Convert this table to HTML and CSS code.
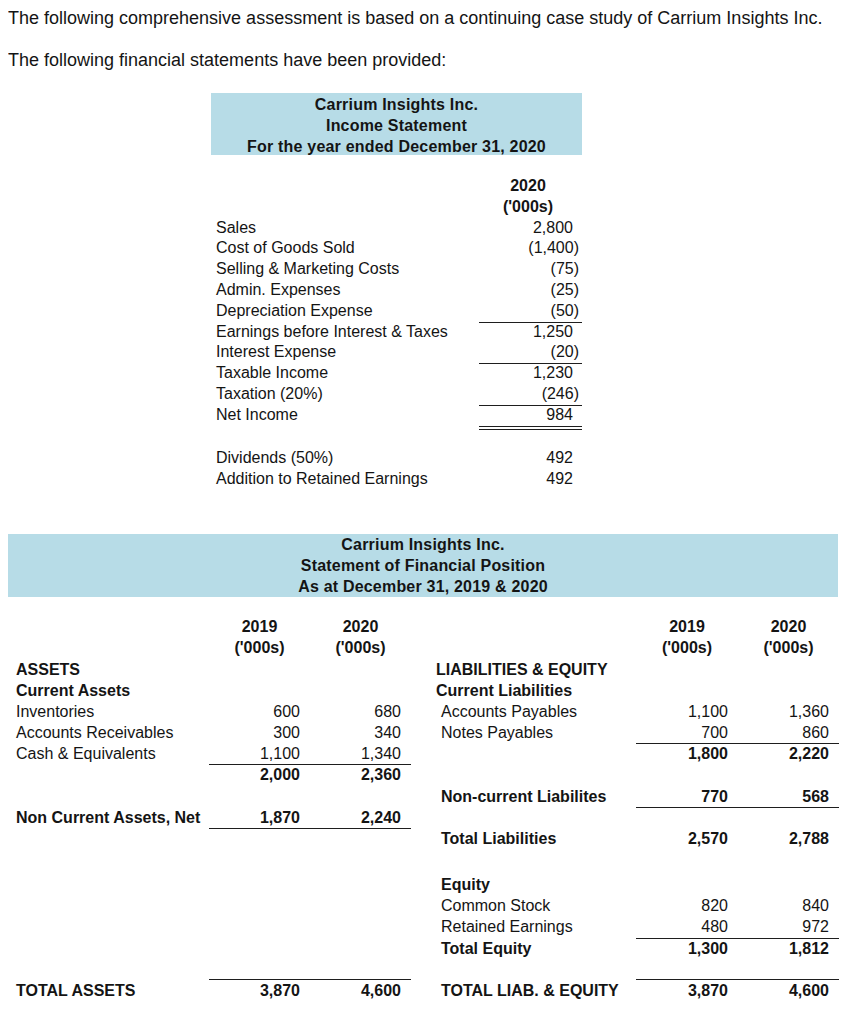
FILE: index.html
```html
<!DOCTYPE html>
<html lang="en">
<head>
<meta charset="utf-8">
<title>Carrium Insights Inc. – Financial Statements</title>
<link rel="stylesheet" href="styles.css">
</head>
<body>
<p class="intro">The following comprehensive assessment is based on a continuing case study of Carrium Insights Inc.</p>
<p class="intro intro-second">The following financial statements have been provided:</p>

<section class="income">
  <div class="banner income-banner">
    <div>Carrium Insights Inc.</div>
    <div>Income Statement</div>
    <div>For the year ended December 31, 2020</div>
  </div>
  <div class="is-rows">
    <div class="is-row"><span></span><span class="col-head">2020</span></div>
    <div class="is-row"><span></span><span class="col-head">('000s)</span></div>
    <div class="is-row"><span class="is-label">Sales</span><span class="num">2,800</span></div>
    <div class="is-row"><span class="is-label">Cost of Goods Sold</span><span class="num neg">(1,400)</span></div>
    <div class="is-row"><span class="is-label">Selling &amp; Marketing Costs</span><span class="num neg">(75)</span></div>
    <div class="is-row"><span class="is-label">Admin. Expenses</span><span class="num neg">(25)</span></div>
    <div class="is-row"><span class="is-label">Depreciation Expense</span><span class="num neg ul">(50)</span></div>
    <div class="is-row"><span class="is-label">Earnings before Interest &amp; Taxes</span><span class="num">1,250</span></div>
    <div class="is-row"><span class="is-label">Interest Expense</span><span class="num neg ul">(20)</span></div>
    <div class="is-row"><span class="is-label">Taxable Income</span><span class="num">1,230</span></div>
    <div class="is-row"><span class="is-label">Taxation (20%)</span><span class="num neg ul">(246)</span></div>
    <div class="is-row"><span class="is-label">Net Income</span><span class="num dbl">984</span></div>
    <div class="is-row is-spacer"><span></span><span></span></div>
    <div class="is-row"><span class="is-label">Dividends (50%)</span><span class="num">492</span></div>
    <div class="is-row"><span class="is-label">Addition to Retained Earnings</span><span class="num">492</span></div>
  </div>
</section>

<section class="position">
  <div class="banner position-banner">
    <div>Carrium Insights Inc.</div>
    <div>Statement of Financial Position</div>
    <div>As at December 31, 2019 &amp; 2020</div>
  </div>
  <div class="bs-rows">
    <div class="bs-row">
      <span></span><span class="col-head">2019</span><span class="col-head">2020</span><span></span>
      <span></span><span class="col-head">2019</span><span class="col-head">2020</span>
    </div>
    <div class="bs-row">
      <span></span><span class="col-head">('000s)</span><span class="col-head">('000s)</span><span></span>
      <span></span><span class="col-head">('000s)</span><span class="col-head">('000s)</span>
    </div>
    <div class="bs-row">
      <span class="lbl-left bold">ASSETS</span><span></span><span></span><span></span>
      <span class="lbl-right bold">LIABILITIES &amp; EQUITY</span><span></span><span></span>
    </div>
    <div class="bs-row">
      <span class="lbl-left bold">Current Assets</span><span></span><span></span><span></span>
      <span class="lbl-right bold">Current Liabilities</span><span></span><span></span>
    </div>
    <div class="bs-row">
      <span class="lbl-left">Inventories</span><span class="bnum">600</span><span class="bnum">680</span><span></span>
      <span class="lbl-right ind">Accounts Payables</span><span class="bnum">1,100</span><span class="bnum">1,360</span>
    </div>
    <div class="bs-row">
      <span class="lbl-left">Accounts Receivables</span><span class="bnum">300</span><span class="bnum">340</span><span></span>
      <span class="lbl-right ind">Notes Payables</span><span class="bnum ul">700</span><span class="bnum ul">860</span>
    </div>
    <div class="bs-row">
      <span class="lbl-left">Cash &amp; Equivalents</span><span class="bnum ul">1,100</span><span class="bnum ul">1,340</span><span></span>
      <span></span><span class="bnum bold">1,800</span><span class="bnum bold">2,220</span>
    </div>
    <div class="bs-row">
      <span></span><span class="bnum bold">2,000</span><span class="bnum bold">2,360</span><span></span>
      <span></span><span></span><span></span>
    </div>
    <div class="bs-row">
      <span></span><span></span><span></span><span></span>
      <span class="lbl-right ind bold">Non-current Liabilites</span><span class="bnum bold ul">770</span><span class="bnum bold ul">568</span>
    </div>
    <div class="bs-row">
      <span class="lbl-left bold">Non Current Assets, Net</span><span class="bnum bold ul">1,870</span><span class="bnum bold ul">2,240</span><span></span>
      <span></span><span></span><span></span>
    </div>
    <div class="bs-row">
      <span></span><span></span><span></span><span></span>
      <span class="lbl-right ind bold">Total Liabilities</span><span class="bnum bold">2,570</span><span class="bnum bold">2,788</span>
    </div>
    <div class="bs-row bs-gap"></div>
    <div class="bs-row">
      <span></span><span></span><span></span><span></span>
      <span class="lbl-right ind bold">Equity</span><span></span><span></span>
    </div>
    <div class="bs-row">
      <span></span><span></span><span></span><span></span>
      <span class="lbl-right ind">Common Stock</span><span class="bnum">820</span><span class="bnum">840</span>
    </div>
    <div class="bs-row">
      <span></span><span></span><span></span><span></span>
      <span class="lbl-right ind">Retained Earnings</span><span class="bnum ul">480</span><span class="bnum ul">972</span>
    </div>
    <div class="bs-row">
      <span></span><span></span><span></span><span></span>
      <span class="lbl-right ind bold">Total Equity</span><span class="bnum bold">1,300</span><span class="bnum bold">1,812</span>
    </div>
    <div class="bs-row"></div>
    <div class="bs-row">
      <span class="lbl-left bold">TOTAL ASSETS</span><span class="bnum bold total">3,870</span><span class="bnum bold total">4,600</span><span></span>
      <span class="lbl-right ind bold">TOTAL LIAB. &amp; EQUITY</span><span class="bnum bold total">3,870</span><span class="bnum bold total">4,600</span>
    </div>
  </div>
</section>
</body>
</html>
```

FILE: styles.css
```css
html, body {
  background: #ffffff;
}

body {
  margin: 8px;
  font-family: "Liberation Sans", Arial, Helvetica, sans-serif;
  color: #141414;
}

.intro {
  margin: 0;
  font-size: 18px;
  line-height: 20px;
}

.intro-second {
  margin-top: 22px;
}

.banner {
  background: #b7dce7;
  font-weight: bold;
  font-size: 16px;
  letter-spacing: 0.2px;
  text-align: center;
}

.income {
  margin-left: 203px;
  width: 371px;
  margin-top: 23px;
}

.income-banner {
  height: 62px;
  line-height: 21px;
  padding-top: 0.5px;
  box-sizing: border-box;
}

.is-rows {
  margin-top: 21px;
  font-size: 16px;
}

.is-row {
  display: grid;
  grid-template-columns: 268px 103px;
  height: 20.8px;
  line-height: 20.8px;
}

.is-row > span {
  box-sizing: border-box;
  white-space: nowrap;
}

.is-spacer {
  height: 22.6px;
}

.is-label {
  padding-left: 5px;
}

.col-head {
  font-weight: bold;
  text-align: center;
  padding-right: 5px;
}

.num {
  text-align: right;
  padding-right: 9px;
}

.num.neg {
  padding-right: 3px;
}

.ul {
  border-bottom: 1px solid #1e1e1e;
}

.dbl {
  border-bottom: 4px double #1e1e1e;
  margin-bottom: -4px;
}

.position {
  margin-top: 44px;
}

.position-banner {
  width: 830px;
  height: 63px;
  line-height: 21px;
  padding-top: 0.5px;
  box-sizing: border-box;
}

.bs-rows {
  margin-top: 19.4px;
  font-size: 16px;
}

.bs-row {
  display: grid;
  grid-template-columns: 201px 101px 101px 25px 200px 102px 101px;
  height: 21.2px;
  line-height: 21.2px;
}

.bs-row > span {
  box-sizing: border-box;
  white-space: nowrap;
}

.bs-gap {
  height: 24.8px;
}

.bs-row .col-head {
  padding-right: 0;
}

.lbl-left {
  padding-left: 8px;
}

.lbl-right.ind {
  padding-left: 5px;
}

.bnum {
  text-align: right;
  padding-right: 10px;
}

.bold {
  font-weight: bold;
}

.total {
  border-top: 1px solid #1e1e1e;
  border-bottom: 1px solid #1e1e1e;
  margin-top: -1px;
  line-height: 21px;
}
```
